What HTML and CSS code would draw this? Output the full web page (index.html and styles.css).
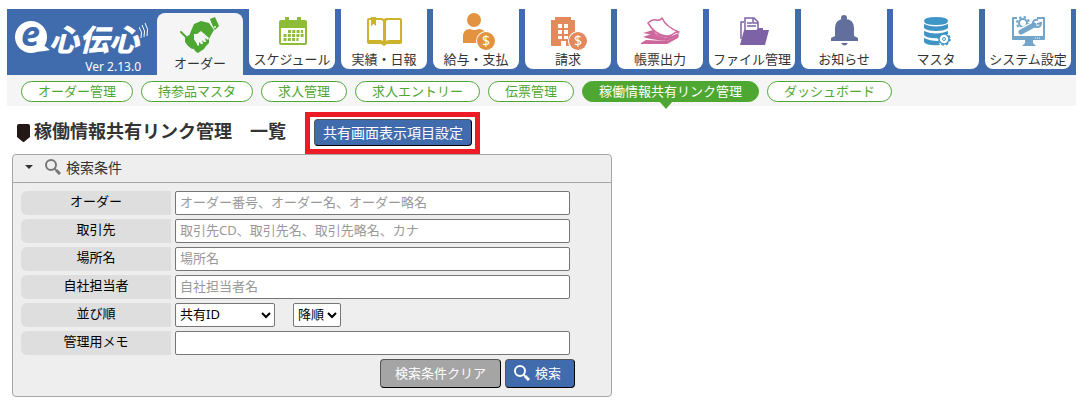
FILE: index.html
```
<!DOCTYPE html>
<html lang="ja">
  <head>
    <meta charset="UTF-8" />
    <meta name="viewport" content="width=device-width, initial-scale=1.0" />
    <title>稼働情報共有リンク管理</title>
    <link rel="stylesheet" href="styles.css">
  </head>
  <body>
    <header class="header">
      <div class="logo">
        <div class="logo-name">
          <svg class="logo-mark" viewBox="0 0 34 34">
            <circle cx="16" cy="16" r="16" fill="#fff" />
            <path fill="#fff" d="M26 22l9 7-5 1-10 1z" />
            <text x="6" y="25" class="logo-e">e</text>
          </svg>
          <span class="logo-text">心伝心</span>
          <svg class="logo-wave" viewBox="0 0 10 18">
            <path d="M0 6q4 5 2 11M3 4q4 6 2 12M6 2q4 6 2 13" fill="none" stroke="#fff" />
          </svg>
        </div>
        <span class="version">Ver 2.13.0</span>
      </div>
      <nav class="tabs">
        <a class="tab is-active" href="#">
          <svg viewBox="5 5 40 34">
            <path fill="#4da731" d="M16 17l3-7 7-3 8 2 5 7-3 5-2 4v4l-3 3-2 3-3 2-3 2-2-1-3-4-5-9z" />
            <path fill="#f5f5f5" d="M19 20l3 0 4-3 8 7-1 2-3-2 1 4-2 0-2-2 1 4-2 0-2-2 0 4-2-1-3-5z" />
            <path fill="#4da731" d="M35 5l5-2 4 9-5 5z" />
            <path d="M34 6l6 11" stroke="#f5f5f5" />
            <circle cx="40" cy="13" r="1" fill="#f5f5f5" />
            <path d="M6 18l6 6" stroke="#4da731" stroke-width="2" stroke-linecap="round" />
            <path fill="#4da731" d="M10 24l4-3 4 3 4 6 0 4-5 1-4-3-3-4z" />
          </svg>
          <span>オーダー</span>
        </a>
        <a class="tab" href="#">
          <svg viewBox="0 0 40 34">
            <path fill="#8fbc36" d="M9 3h4V0h4v3h8V0h4v3h4q2 0 2 2v21q0 2-2 2H9q-2 0-2-2V5q0-2 2-2z" />
            <path fill="#fff" d="M9 11h24v15H9z" />
            <path d="M16 14.500h15M11.500 18.500h20M11.500 22.500h15" stroke="#8fbc36" stroke-width="2.800" stroke-dasharray="3 1.300" />
          </svg>
          <span>スケジュール</span>
        </a>
        <a class="tab" href="#">
          <svg viewBox="0 0 40 34">
            <path fill="#cdb32b" d="M3 3q0-2 2-2h12q2 0 3 1 1-1 3-1h13q2 0 2 2v22q0 2-2 2H23l-3 2-3-2H5q-2 0-2-2z" />
            <path fill="#fff" d="M5 3h12q2 0 2 2v19q-1-1-3-1H5zM36 3H24q-2 0-2 2v19q1-1 3-1h11z" />
            <path fill="#cdb32b" d="M7 0h5v9l-2.500-2L7 9z" />
          </svg>
          <span>実績・日報</span>
        </a>
        <a class="tab" href="#">
          <svg viewBox="0 0 40 34">
            <circle cx="18" cy="3" r="7" fill="#e3923f" />
            <path fill="#e3923f" d="M7 26v-6q0-8 7-8 4 2 9 0 6 0 7 6v8z" />
            <circle cx="30" cy="24" r="10" fill="#fff" />
            <circle cx="30" cy="24" r="9" fill="#e3923f" />
            <text x="26" y="29" class="coin">$</text>
          </svg>
          <span>給与・支払</span>
        </a>
        <a class="tab" href="#">
          <svg viewBox="0 0 40 34">
            <path fill="#e38a5d" d="M3 3h4V0h16v3h4v26H18v-5h-5v5H3z" />
            <path fill="#fff" d="M10 7h4v4h-4zM16 7h4v4h-4zM10 13h4v4h-4zM16 13h4v4h-4zM10 19h4v3h-4zM16 19h4v3h-4z" />
            <circle cx="30" cy="24" r="10" fill="#fff" />
            <circle cx="30" cy="24" r="9" fill="#e38a5d" />
            <text x="26" y="29" class="coin">$</text>
          </svg>
          <span>請求</span>
        </a>
        <a class="tab" href="#">
          <svg viewBox="0 0 40 34">
            <path fill="#cd679c" d="M1 26l5-3 21 1 12-6-1 3-11 6H1z" />
            <path fill="#cd679c" d="M3 20l8-3 16 4 12-5-1 3-11 5q-14-1-24-4z" />
            <path fill="#cd679c" d="M3 16l10-3 3 4 17 2-5 2z" />
            <path d="M8 6q4-4 8-3t6-2q4 9 17 14-4 0-6 2t-7 2q-11-1-18-13z" fill="#fff" stroke="#cd679c" stroke-width="1.500" stroke-linejoin="round" />
          </svg>
          <span>帳票出力</span>
        </a>
        <a class="tab" href="#">
          <svg viewBox="0 0 40 34">
            <path d="M9 22V5h3M13 14V1h9l4 4v7M21 1v5h5" fill="none" stroke="#7d62a5" stroke-width="1.500" />
            <path d="M15 6h5M15 9h9" stroke="#7d62a5" stroke-width="1.500" />
            <path fill="#7d62a5" d="M12 13h12l3-2h4v2h6l-4 15H8z" />
          </svg>
          <span>ファイル管理</span>
        </a>
        <a class="tab" href="#">
          <svg viewBox="0 0 40 34">
            <circle cx="20" cy="1" r="3" fill="#626f9c" />
            <path fill="#626f9c" d="M11 19v-8q0-9 9.500-9t9.500 9v8l4 2v3H7v-3zM17 26h7q-3.500 5-7 0z" />
          </svg>
          <span>お知らせ</span>
        </a>
        <a class="tab" href="#">
          <svg viewBox="0 0 40 34">
            <path fill="#3f95c6" d="M8 4q0-4 12-4t12 4-12 4T8 4zM8 7q12 5 24 0v4q-3 3-12 3T8 11zM8 14q12 5 24 0v3q-6 0-9 4-11 1-15-3zM8 21q6 3 14 3l2 4Q11 29 8 25z" />
            <circle cx="28" cy="22" r="5" fill="#fff" stroke="#3f95c6" stroke-width="1.500" />
            <circle cx="28" cy="22" r="6" fill="none" stroke="#3f95c6" stroke-dasharray="2.500 2.200" stroke-width="1.500" />
            <circle cx="28" cy="22" r="1.500" fill="none" stroke="#3f95c6" />
          </svg>
          <span>マスタ</span>
        </a>
        <a class="tab" href="#">
          <svg viewBox="0 0 40 34">
            <path fill="#72a5c9" d="M5 0h31q1 0 1 1v21q0 1-1 1H25v3l3 3H14l3-3v-3H5q-1 0-1-1V1q0-1 1-1z" />
            <path fill="#fff" d="M6 2h3V0h20v2h6v17H6z" />
            <path d="M27 21h6" stroke="#fff" stroke-dasharray="1 1" />
            <circle cx="15" cy="6" r="4" fill="none" stroke="#72a5c9" stroke-width="2" />
            <circle cx="15" cy="6" r="6" fill="none" stroke="#72a5c9" stroke-dasharray="2.500 2.200" stroke-width="2" />
            <path d="M12 15L26 8" stroke="#fff" stroke-width="7" />
            <path d="M13 15L26 8" stroke="#72a5c9" stroke-width="5" stroke-linecap="round" />
            <path d="M30 3q-5-1-5 3t4 4 4-4l-4 1" fill="none" stroke="#72a5c9" stroke-width="2" />
          </svg>
          <span>システム設定</span>
        </a>
      </nav>
    </header>
    <nav class="subnav">
      <a class="pill" href="#">オーダー管理</a>
      <a class="pill" href="#">持参品マスタ</a>
      <a class="pill" href="#">求人管理</a>
      <a class="pill" href="#">求人エントリー</a>
      <a class="pill" href="#">伝票管理</a>
      <a class="pill is-active" href="#">稼働情報共有リンク管理</a>
      <a class="pill" href="#">ダッシュボード</a>
    </nav>
    <main>
      <div class="title-row">
        <svg class="title-mark" viewBox="0 0 13 18">
          <path fill="#231815" d="M0 2q0-2 2-2h9q2 0 2 2v11l-6 5h-1l-6-5z" />
        </svg>
        <h1>稼働情報共有リンク管理　一覧</h1>
        <div class="highlight">
          <button class="button setting" type="button">共有画面表示項目設定</button>
        </div>
      </div>
      <section class="panel">
        <h2 class="panel-title">
          <span class="caret"></span>
          <svg class="glass" viewBox="0 0 16 16">
            <circle cx="6" cy="6" r="5" fill="none" stroke="currentColor" stroke-width="2" />
            <path d="M9 9l2 2" stroke="currentColor" stroke-width="2" />
            <path d="M11 11l4 4" stroke="currentColor" stroke-width="3" />
          </svg>
          検索条件
        </h2>
        <form class="search">
          <div class="row">
            <label for="order">オーダー</label>
            <input id="order" type="text" placeholder="オーダー番号、オーダー名、オーダー略名" />
          </div>
          <div class="row">
            <label for="client">取引先</label>
            <input id="client" type="text" placeholder="取引先CD、取引先名、取引先略名、カナ" />
          </div>
          <div class="row">
            <label for="place">場所名</label>
            <input id="place" type="text" placeholder="場所名" />
          </div>
          <div class="row">
            <label for="staff">自社担当者</label>
            <input id="staff" type="text" placeholder="自社担当者名" />
          </div>
          <div class="row">
            <label for="sort">並び順</label>
            <select id="sort" class="sort-key">
              <option>共有ID</option>
            </select>
            <select class="sort-dir" aria-label="並び順の方向">
              <option>降順</option>
            </select>
          </div>
          <div class="row">
            <label for="memo">管理用メモ</label>
            <input id="memo" type="text" />
          </div>
          <div class="actions">
            <button class="button clear" type="reset">検索条件クリア</button>
            <button class="button submit" type="button">
              <svg class="glass" viewBox="0 0 16 16">
                <circle cx="6" cy="6" r="5" fill="none" stroke="currentColor" stroke-width="2" />
                <path d="M9 9l2 2" stroke="currentColor" stroke-width="2" />
                <path d="M11 11l4 4" stroke="currentColor" stroke-width="3" />
              </svg>
              検索
            </button>
          </div>
        </form>
      </section>
    </main>
  </body>
</html>
```
FILE: styles.css
```
:root {
  --blue: #406bad;
  --green: #4da731;
}

* {
  box-sizing: border-box;
}

body {
  margin: 0;
  padding: 9px 10px 0 7px;
  background-color: #fff;
  color: #333;
  font-family: "Noto Sans", "Noto Sans CJK JP", sans-serif;
  font-size: 13px;
}

a {
  text-decoration: none;
}

/* Header */

.header {
  display: flex;
  height: 66px;
  background-color: var(--blue);
}

.logo {
  display: flex;
  flex: none;
  flex-direction: column;
  width: 150px;
  padding: 12px 8px 0;
  color: #fff;
}

.logo-name {
  display: flex;
  height: 34px;
}

.logo-mark {
  flex: none;
  width: 34px;
  height: 34px;
  overflow: visible;
}

.logo-e {
  fill: var(--blue);
  font-size: 34px;
  font-weight: bold;
  font-style: italic;
}

.logo-text {
  font-family: "Noto Sans CJK JP", sans-serif;
  font-size: 30px;
  font-weight: 900;
  font-style: italic;
  line-height: 34px;
  white-space: nowrap;
}

.logo-wave {
  flex: none;
  width: 10px;
  height: 18px;
}

.version {
  align-self: flex-end;
  padding-right: 8px;
  font-size: 12px;
  line-height: 24px;
}

.tabs {
  display: flex;
  gap: 6px;
}

.tab {
  display: flex;
  flex-direction: column;
  align-items: center;
  justify-content: space-between;
  width: 86px;
  height: 60px;
  padding: 8px 0 2px;
  border-radius: 0 0 8px 8px;
  background-color: #fff;
  color: #333;
  white-space: nowrap;
}

.tab svg {
  flex: none;
  width: 40px;
  height: 34px;
  overflow: visible;
}

.tab span {
  line-height: 16px;
}

.tab.is-active {
  height: 62px;
  margin-top: 4px;
  padding: 6px 0 4px;
  border-radius: 8px 8px 0 0;
  background-color: #f5f5f5;
}

.coin {
  fill: #fff;
  font-size: 14px;
}

/* Sub navigation */

.subnav {
  display: flex;
  gap: 8px;
  padding: 6px 14px 4px;
  background-color: #f5f5f5;
}

.pill {
  position: relative;
  height: 21px;
  padding: 0 16px;
  border: 1px solid var(--green);
  border-radius: 11px;
  background-color: #fff;
  color: var(--green);
  line-height: 19px;
  white-space: nowrap;
}

.pill.is-active {
  background-color: var(--green);
  color: #fff;
}

.pill.is-active::after {
  content: "";
  position: absolute;
  top: 100%;
  left: 76px;
  border: 7px solid transparent;
  border-top: 8px solid var(--green);
  border-bottom: 0;
}

/* Title */

.title-row {
  display: flex;
  align-items: flex-start;
  padding: 6px 10px 0;
}

.title-mark {
  flex: none;
  width: 13px;
  height: 18px;
  margin: 12px 4px 0 0;
}

h1 {
  margin: 0;
  font-size: 18px;
  line-height: 38px;
}

.highlight {
  margin-left: 19px;
  padding: 2px 3px 3px 4px;
  border: 5px solid #ed1c24;
}

.button {
  display: flex;
  align-items: center;
  justify-content: center;
  border: 1px solid;
  border-color: #555 #000 #000 #555;
  border-radius: 4px;
  background-color: var(--blue);
  color: #fff;
  font-family: inherit;
  font-size: 13px;
  padding: 0 0 2px;
}

.setting {
  width: 158px;
  height: 27px;
  font-size: 14px;
}

/* Search panel */

.panel {
  max-width: 600px;
  margin-left: 5px;
  border: 1px solid #a6a6a6;
  border-radius: 4px;
  background-color: #eee;
}

.panel-title {
  display: flex;
  align-items: center;
  height: 28px;
  margin: 0;
  padding: 0 12px 4px;
  border-bottom: 1px solid #a6a6a6;
  font-size: 14px;
  font-weight: normal;
}

.caret {
  margin-right: 12px;
  border: 4px solid transparent;
  border-top-color: #333;
  border-bottom: 0;
}

.glass {
  width: 16px;
  height: 16px;
  margin-right: 5px;
}

.panel-title .glass {
  color: #777;
}

.search {
  display: flex;
  flex-direction: column;
  gap: 4px;
  padding: 8px 36px 8px 8px;
}

.row {
  display: flex;
  height: 24px;
}

.row label {
  flex: none;
  width: 150px;
  margin-right: 4px;
  border-radius: 6px 0 0 6px;
  background-color: #dedede;
  color: #000;
  line-height: 20px;
  text-align: center;
}

.row input,
.row select {
  border: 1px solid #767676;
  border-radius: 2px;
  background-color: #fff;
  color: #000;
  font-family: inherit;
  font-size: 13px;
}

.row input {
  flex: 1;
  max-width: 395px;
  padding: 0 4px 2px;
}

.row input::placeholder {
  color: #999;
}

.row select {
  padding: 0 0 2px;
}

.sort-key {
  width: 100px;
  margin-right: 18px;
}

.sort-dir {
  width: 48px;
}

.actions {
  display: flex;
  justify-content: flex-end;
  gap: 4px;
}

.clear {
  width: 121px;
  height: 29px;
  background-color: #a5a5a5;
}

.submit {
  justify-content: flex-start;
  width: 70px;
  height: 29px;
  padding-left: 8px;
}
```
